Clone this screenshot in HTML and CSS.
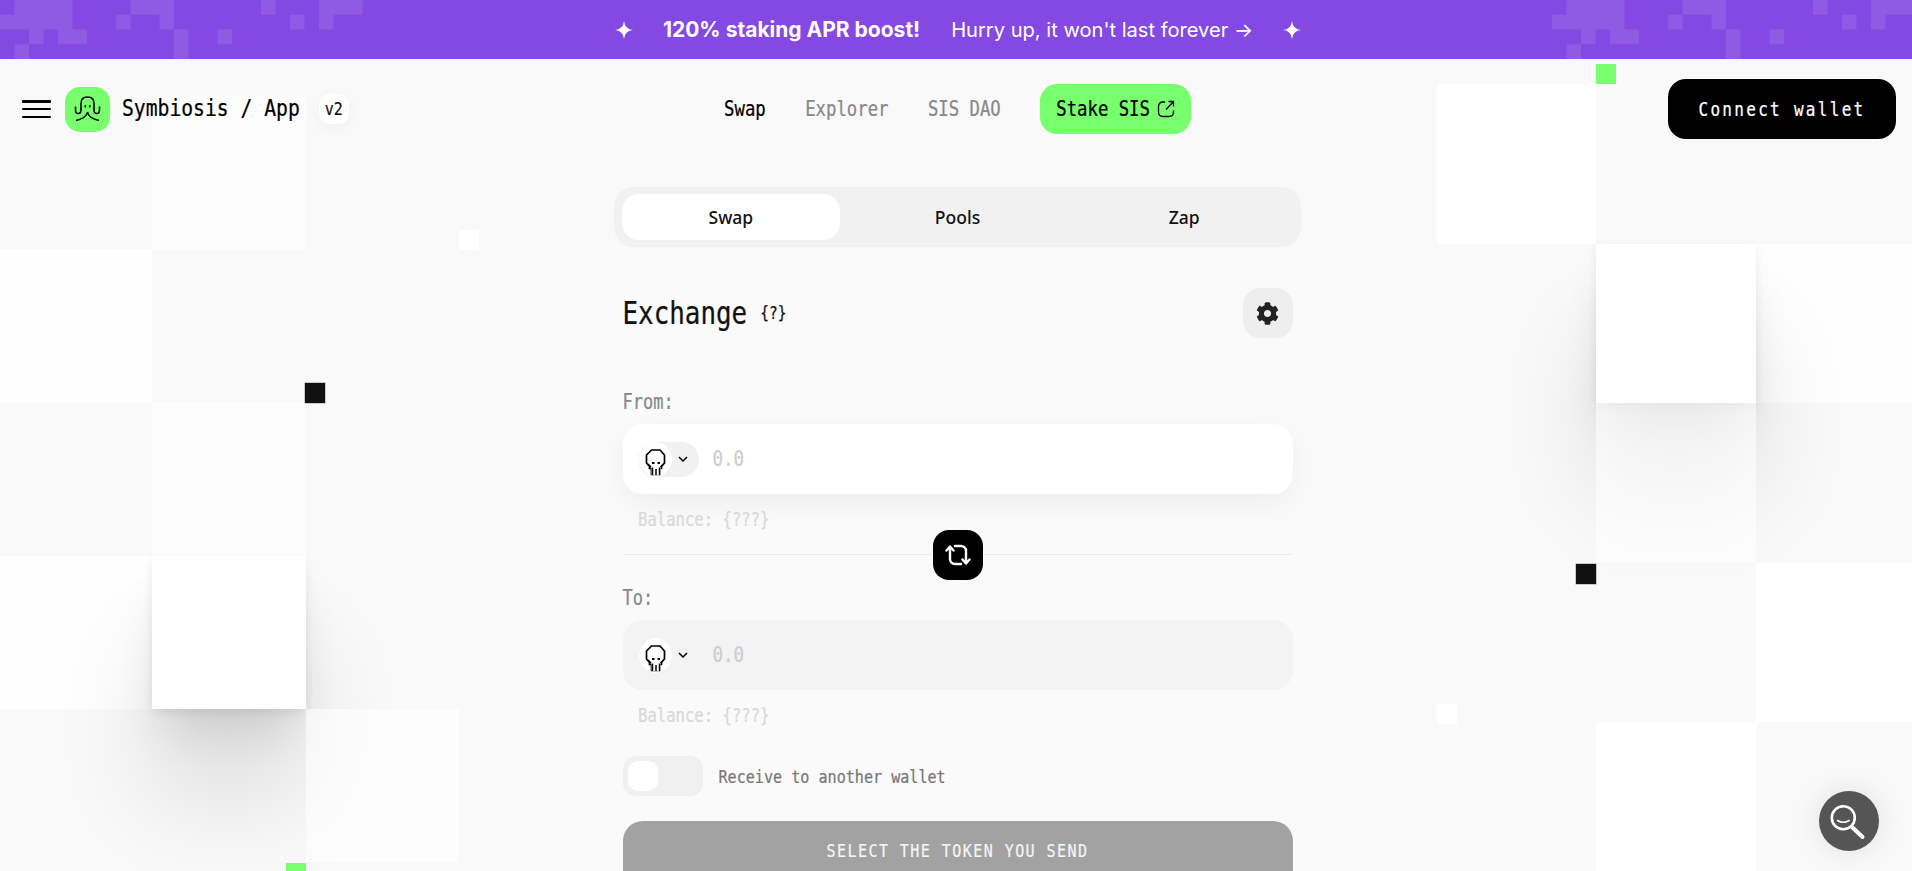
FILE: index.html
```html
<!DOCTYPE html>
<html lang="en">
<head>
<meta charset="utf-8">
<title>Symbiosis App</title>
<link rel="stylesheet" href="styles.css">
</head>
<body>
<svg class="defs" width="0" height="0" aria-hidden="true">
  <symbol id="pixels" viewBox="0 0 363 59">
    <path d="M14.5 0h58v14.75h-58zM130.5 0h43.5v14.75h-43.5zM261 0h14.5v14.75H261zM319 0h43.5v14.75H319zM0 14.75h72.5V29.5H0zM116 14.75h14.5V29.5H116zM159.5 14.75H174V29.5h-14.5zM290 14.75h14.5V29.5H290zM319 14.75h14.5V29.5H319zM29 29.5h14.5v14.75H29zM58 29.5h29v14.75H58zM174 29.5h14.5v14.75H174zM217.5 29.5H232v14.75h-14.5zM14.5 44.25H29V59H14.5zM174 44.25h14.5V59H174z"/>
  </symbol>
  <symbol id="star" viewBox="0 0 18 18">
    <path d="M9 0Q9.8 8.2 18 9 9.8 9.8 9 18 8.2 9.8 0 9 8.2 8.2 9 0Z"/>
  </symbol>
  <symbol id="skull" viewBox="0 0 33 35">
    <path d="M12.5 8h8.5l4.5 5v8l-3 3.500v2h-2v6h-8v-6h-2v-2l-3-3.500v-8z" fill="none" stroke="#000" stroke-width="1.700"/>
    <path d="M12.500 25h9v8h-9z" fill="#fff"/>
    <path d="M9 22l3 3M24.500 22l-3 3M13.500 25.500v7.500M17 27v6M20.500 25.500v7.500" fill="none" stroke="#000" stroke-width="1.500"/>
    <path d="M13 20h2.500v2H13zM18.500 20H21v2h-2.500z"/>
  </symbol>
  <symbol id="chev" viewBox="0 0 10 6">
    <path d="M1 1l4 4 4-4" fill="none" stroke="#000" stroke-width="1.500"/>
  </symbol>
</svg>

<div class="tiles tiles-left" aria-hidden="true">
  <i class="tile soft c2 r1"></i>
  <i class="tile bright c1 r2"></i>
  <i class="tile soft c2 r3"></i>
  <i class="tile bright c1 r4"></i>
  <i class="tile raised c2 r4"></i>
  <i class="tile soft c3 r5"></i>
  <i class="dot white dot-l1"></i>
  <i class="dot black dot-l2"></i>
  <i class="dot green dot-l3"></i>
</div>
<div class="tiles tiles-right" aria-hidden="true">
  <i class="tile solid c1 r1"></i>
  <i class="tile bright c3 r2"></i>
  <i class="tile raised c2 r2"></i>
  <i class="tile soft c2 r3"></i>
  <i class="tile solid c3 r4"></i>
  <i class="tile solid c2 r5"></i>
  <i class="dot green dot-r1"></i>
  <i class="dot black dot-r2"></i>
  <i class="dot white dot-r3"></i>
</div>

<div class="banner">
  <svg class="pixels pixels-l"><use href="#pixels"/></svg>
  <svg class="pixels pixels-r"><use href="#pixels"/></svg>
  <svg class="star"><use href="#star"/></svg>
  <strong class="banner-strong">120% staking APR boost!</strong>
  <span class="banner-text">Hurry up, it won't last forever →</span>
  <svg class="star"><use href="#star"/></svg>
</div>

<header class="header">
  <div class="brand">
    <button class="burger" aria-label="Menu"><i></i><i></i><i></i></button>
    <span class="logo">
      <svg viewBox="0 0 45 45" width="45" height="45" fill="none" stroke="#000" stroke-width="1.500">
        <path d="M16 23V16.500q0-6.500 6.500-6.500T29 16.500V23"/>
        <path d="M16 21v2q0 3.500-2.800 3.500T10.500 23v-3.500M29 21v2q0 3.500 2.800 3.500T34.500 23v-3.500"/>
        <path d="M22.500 25q-1 6-11.500 8.500M22.500 25q1 6 11.500 8.500"/>
        <path d="M20.300 18v2.500M24.700 18v2.500"/>
      </svg>
    </span>
    <span class="mono brand-name">Symbiosis / App</span>
    <span class="version"><span class="mono">v2</span></span>
  </div>
  <nav class="nav">
    <a class="mono nav-link is-active">Swap</a>
    <a class="mono nav-link">Explorer</a>
    <a class="mono nav-link">SIS DAO</a>
    <a class="stake">
      <span class="mono">Stake SIS</span>
      <svg viewBox="0 0 18 18" width="18" height="18" fill="none" stroke="#000" stroke-width="1.300">
        <path d="M8 2H6Q1.500 2 1.500 6.500V12q0 4.500 4.500 4.500h6q4.500 0 4.500-4.500v-1.500"/>
        <path d="M9 9.500L16.500 1.500M11.500 1.500h5v5"/>
      </svg>
    </a>
  </nav>
  <div class="actions">
    <button class="connect"><span class="mono">Connect wallet</span></button>
  </div>
</header>

<main class="main">
  <div class="tabs">
    <button class="tab is-active">Swap</button>
    <button class="tab">Pools</button>
    <button class="tab">Zap</button>
  </div>

  <section class="card">
    <div class="card-head">
      <div class="title-wrap">
        <h1 class="mono title">Exchange</h1>
        <span class="mono hint">{?}</span>
      </div>
      <button class="settings" aria-label="Settings">
        <svg viewBox="0 0 512 512" width="23" height="23"><path fill="#222" d="M487.4 315.700l-42.600-24.600c4.300-23.200 4.300-47 0-70.200l42.600-24.600c4.900-2.800 7.100-8.600 5.500-14-11.100-35.600-30-67.800-54.700-94.600-3.800-4.100-10-5.100-14.800-2.300L380.800 110c-17.900-15.400-38.500-27.300-60.800-35.100V25.800c0-5.600-3.900-10.500-9.400-11.700-36.700-8.200-74.300-7.800-109.200 0-5.500 1.200-9.400 6.100-9.400 11.700V75c-22.200 7.900-42.800 19.800-60.800 35.100L88.700 85.500c-4.900-2.800-11-1.900-14.800 2.300-24.700 26.700-43.600 58.900-54.700 94.600-1.700 5.400.6 11.200 5.500 14L67.300 221c-4.300 23.200-4.300 47 0 70.200l-42.600 24.600c-4.900 2.800-7.100 8.600-5.500 14 11.100 35.600 30 67.800 54.700 94.600 3.800 4.100 10 5.100 14.800 2.300l42.600-24.600c17.900 15.400 38.500 27.300 60.800 35.100v49.200c0 5.600 3.900 10.500 9.400 11.700 36.700 8.200 74.300 7.800 109.200 0 5.500-1.200 9.400-6.100 9.400-11.700v-49.200c22.200-7.900 42.800-19.800 60.800-35.100l42.600 24.600c4.900 2.800 11 1.900 14.800-2.300 24.700-26.700 43.600-58.900 54.700-94.600 1.500-5.500-.7-11.300-5.600-14.100zM256 336c-44.100 0-80-35.900-80-80s35.900-80 80-80 80 35.900 80 80-35.900 80-80 80z"/></svg>
      </button>
    </div>

    <div class="mono label label-from">From:</div>
    <div class="field field-from">
      <button class="token">
        <svg class="token-img"><use href="#skull"/></svg>
        <svg class="chev"><use href="#chev"/></svg>
      </button>
      <span class="mono amount">0.0</span>
    </div>
    <div class="mono balance">Balance: {???}</div>

    <div class="divider">
      <button class="swap-btn" aria-label="Swap direction">
        <svg viewBox="0 0 26 22" width="26" height="22" fill="none" stroke="#fff" stroke-width="2.400" stroke-linecap="round" stroke-linejoin="round">
          <path d="M5 3v12a5 5 0 0 0 5 5h6"/>
          <path d="M1.500 6.500L5 2.500l3.500 4"/>
          <path d="M21 19V7a5 5 0 0 0-5-5h-6"/>
          <path d="M17.500 15.500L21 19.500l3.500-4"/>
        </svg>
      </button>
    </div>

    <div class="mono label label-to">To:</div>
    <div class="field field-to">
      <button class="token token-plain">
        <svg class="token-img"><use href="#skull"/></svg>
        <svg class="chev"><use href="#chev"/></svg>
      </button>
      <span class="mono amount">0.0</span>
    </div>
    <div class="mono balance">Balance: {???}</div>

    <div class="receive">
      <span class="toggle"><i class="knob"></i></span>
      <span class="mono receive-label">Receive to another wallet</span>
    </div>

    <button class="submit"><span class="mono">SELECT THE TOKEN YOU SEND</span></button>
  </section>
</main>

<button class="help" aria-label="Help">
  <svg viewBox="0 0 60 60" width="60" height="60" fill="none" stroke="#fff">
    <circle cx="24.300" cy="26.700" r="11.500" stroke-width="2.600"/>
    <path d="M33 36l10.500 10" stroke-width="4" stroke-linecap="round"/>
    <path d="M18.500 29.500q5.800 3.500 11.600 0" stroke-width="1.600" stroke-linecap="round"/>
  </svg>
</button>
</body>
</html>
```
FILE: styles.css
```css
* { box-sizing: border-box; }
html, body { margin: 0; height: 871px; overflow: hidden; }
body {
  background: #f9f9f9;
  font-family: Inter, "Noto Sans", sans-serif;
  color: #111;
  position: relative;
}
button { border: 0; padding: 0; background: none; font: inherit; color: inherit; cursor: pointer; }
h1 { margin: 0; font-weight: 400; }
.defs { position: absolute; }

.mono {
  font-family: "DejaVu Sans Mono", "Liberation Mono", monospace;
  display: inline-block;
  transform: scaleY(1.2);
  line-height: 20px;
  -webkit-text-stroke: .2px currentColor;
}

/* decorative tile canvas */
.tiles {
  position: absolute;
  z-index: 0;
  display: grid;
}
.tiles-left {
  left: -1px; top: 96px;
  grid-template-columns: repeat(3, 153.300px);
  grid-auto-rows: 153.300px;
}
.tiles-right {
  left: 1436.600px; top: 84px;
  grid-template-columns: repeat(3, 159.600px);
  grid-auto-rows: 159.600px;
}
.tile { display: block; }
.soft { background: rgba(255, 255, 255, .6); position: relative; }
.bright { background: #fefefe; }
.solid { background: #fff; }
.raised {
  background: #fff;
  position: relative;
  box-shadow: 0 90px 100px rgba(0, 0, 0, .11), 0 30px 40px -10px rgba(0, 0, 0, .1), 0 4px 10px rgba(0, 0, 0, .07);
}
.c1 { grid-column: 1; } .c2 { grid-column: 2; } .c3 { grid-column: 3; }
.r1 { grid-row: 1; } .r2 { grid-row: 2; } .r3 { grid-row: 3; } .r4 { grid-row: 4; } .r5 { grid-row: 5; }

.dot { position: absolute; width: 20px; height: 20px; }
.dot.white { background: #fff; }
.dot.black { background: #111; box-shadow: 0 0 0 .5px #999; }
.dot.green { background: #78ff6e; }
.dot-l1 { left: 460px; top: 134px; }
.dot-l2 { left: 306px; top: 287px; }
.dot-l3 { left: 287px; top: 767px; }
.dot-r1 { left: 159.600px; top: -20px; }
.dot-r2 { left: 139.400px; top: 480px; }
.dot-r3 { left: 0; top: 620px; }

/* banner */
.banner {
  position: relative;
  z-index: 1;
  height: 59px;
  background: #8349e2;
  color: #fff;
  display: flex;
  align-items: center;
  justify-content: center;
  gap: 30px;
  padding-left: 4px;
  overflow: hidden;
}
.pixels { position: absolute; top: 0; width: 363px; height: 59px; fill: rgba(255, 255, 255, .1); }
.pixels-l { left: 0; }
.pixels-r { right: -2.500px; }
.star { width: 18px; height: 18px; fill: #fff; }
.banner-strong { font-size: 21px; font-weight: 700; }
.banner-text { font-size: 20.100px; font-weight: 400; margin-left: 1px; }

/* header */
.header {
  position: relative;
  z-index: 1;
  height: 100px;
  padding: 0 16px 0 22px;
  display: grid;
  grid-template-columns: 1fr auto 1fr;
  align-items: center;
}
.brand { display: flex; align-items: center; }
.burger { width: 29px; height: 18px; margin-right: 14px; display: flex; flex-direction: column; justify-content: space-between; }
.burger i { display: block; height: 2.500px; background: #000; border-radius: 1px; }
.logo { width: 45px; height: 45px; border-radius: 15px; background: #78ff6e; display: flex; margin-right: 12px; }
.brand-name { font-size: 19.700px; color: #000; margin-right: 19px; white-space: nowrap; }
.version {
  width: 30px; height: 30px; border-radius: 10px; background: #fff;
  display: flex; align-items: center; justify-content: center;
  font-size: 15px; color: #111;
  box-shadow: 0 4px 16px rgba(0, 0, 0, .04);
}
.nav { display: flex; align-items: center; gap: 39.500px; margin-left: -3px; }
.nav-link { font-size: 17.300px; color: #888; white-space: nowrap; }
.nav-link.is-active { color: #000; }
.stake {
  height: 50px; padding: 0 16px 0 16px; border-radius: 17px; background: #78ff6e;
  display: flex; align-items: center; gap: 7px; font-size: 17.300px; color: #000; white-space: nowrap;
}
.actions { display: flex; justify-content: flex-end; }
.connect {
  width: 228px; height: 60px; border-radius: 18px; background: #000; color: #fff;
  font-size: 16px; letter-spacing: 2.300px;
}

/* main column */
.main {
  position: relative;
  z-index: 1;
  margin-left: 3px;
  margin-top: 28px;
  display: flex;
  flex-direction: column;
  align-items: center;
}
.tabs {
  width: 687px; height: 60px; padding: 3.500px; border-radius: 20px; background: #f1f1f1;
  display: grid; grid-template-columns: repeat(3, 1fr);
}
.tab { font-family: "Noto Sans", Inter, sans-serif; font-size: 17.500px; font-weight: 500; color: #111; }
.tab.is-active { background: #fff; border-radius: 17px; margin: 3.500px 4px; }

.card { width: 746px; padding: 41px 38px 0; background: #fafafa; }
.card-head { display: flex; align-items: center; justify-content: space-between; height: 50px; }
.title-wrap { display: flex; align-items: center; gap: 13px; }
.title { font-size: 25.900px; color: #111; }
.hint { font-size: 14.500px; color: #111; }
.settings { width: 50px; height: 50px; border-radius: 17px; background: #eee; display: flex; align-items: center; justify-content: center; }

.label { display: block; font-size: 17px; color: #888; }
.label-from { margin-top: 54px; }
.label-to { margin-top: 33px; }
.field { height: 70px; border-radius: 20px; padding-left: 16px; display: flex; align-items: center; gap: 14px; }
.field-from { margin-top: 12px; background: #fff; box-shadow: 0 10px 30px rgba(0, 0, 0, .05); }
.field-to { margin-top: 12px; background: #f3f3f3; }
.token { width: 60px; height: 35px; border-radius: 18px; background: #f1f1f1; display: flex; align-items: center; gap: 6px; }
.token-plain { background: none; }
.token-img { width: 33px; height: 35px; border-radius: 50%; background: #fff; box-shadow: 0 0 0 .5px #eee; }
.chev { width: 10px; height: 6px; }
.amount { font-size: 17.500px; color: #ccc; }
.balance { display: block; margin-top: 16px; padding-left: 15.500px; font-size: 15.600px; color: #d8d8d8; }

.divider { position: relative; margin-top: 24px; height: 1px; background: #ececec; }
.swap-btn {
  position: absolute; left: 310px; top: -24px;
  width: 50px; height: 50px; border-radius: 16px; background: #000;
  display: flex; align-items: center; justify-content: center;
}

.receive { margin-top: 30px; display: flex; align-items: center; gap: 16px; }
.toggle { width: 80px; height: 40px; border-radius: 13px; background: #f0f0f0; padding: 5px; display: flex; }
.knob { width: 30px; height: 30px; border-radius: 10px; background: #fff; display: block; }
.receive-label { font-size: 15.100px; color: #777; position: relative; top: 1px; }

.submit {
  display: block; width: 100%; height: 70px; margin-top: 25px; padding-bottom: 10px;
  border-radius: 20px; background: #a2a2a2; color: #f5f5f5;
  font-size: 15px; letter-spacing: 1.450px;
}

.help {
  position: fixed; z-index: 2; right: 33px; bottom: 20px;
  width: 60px; height: 60px; border-radius: 50%; background: #555;
  box-shadow: 0 0 30px rgba(0, 0, 0, .1);
  display: block;
}
```
